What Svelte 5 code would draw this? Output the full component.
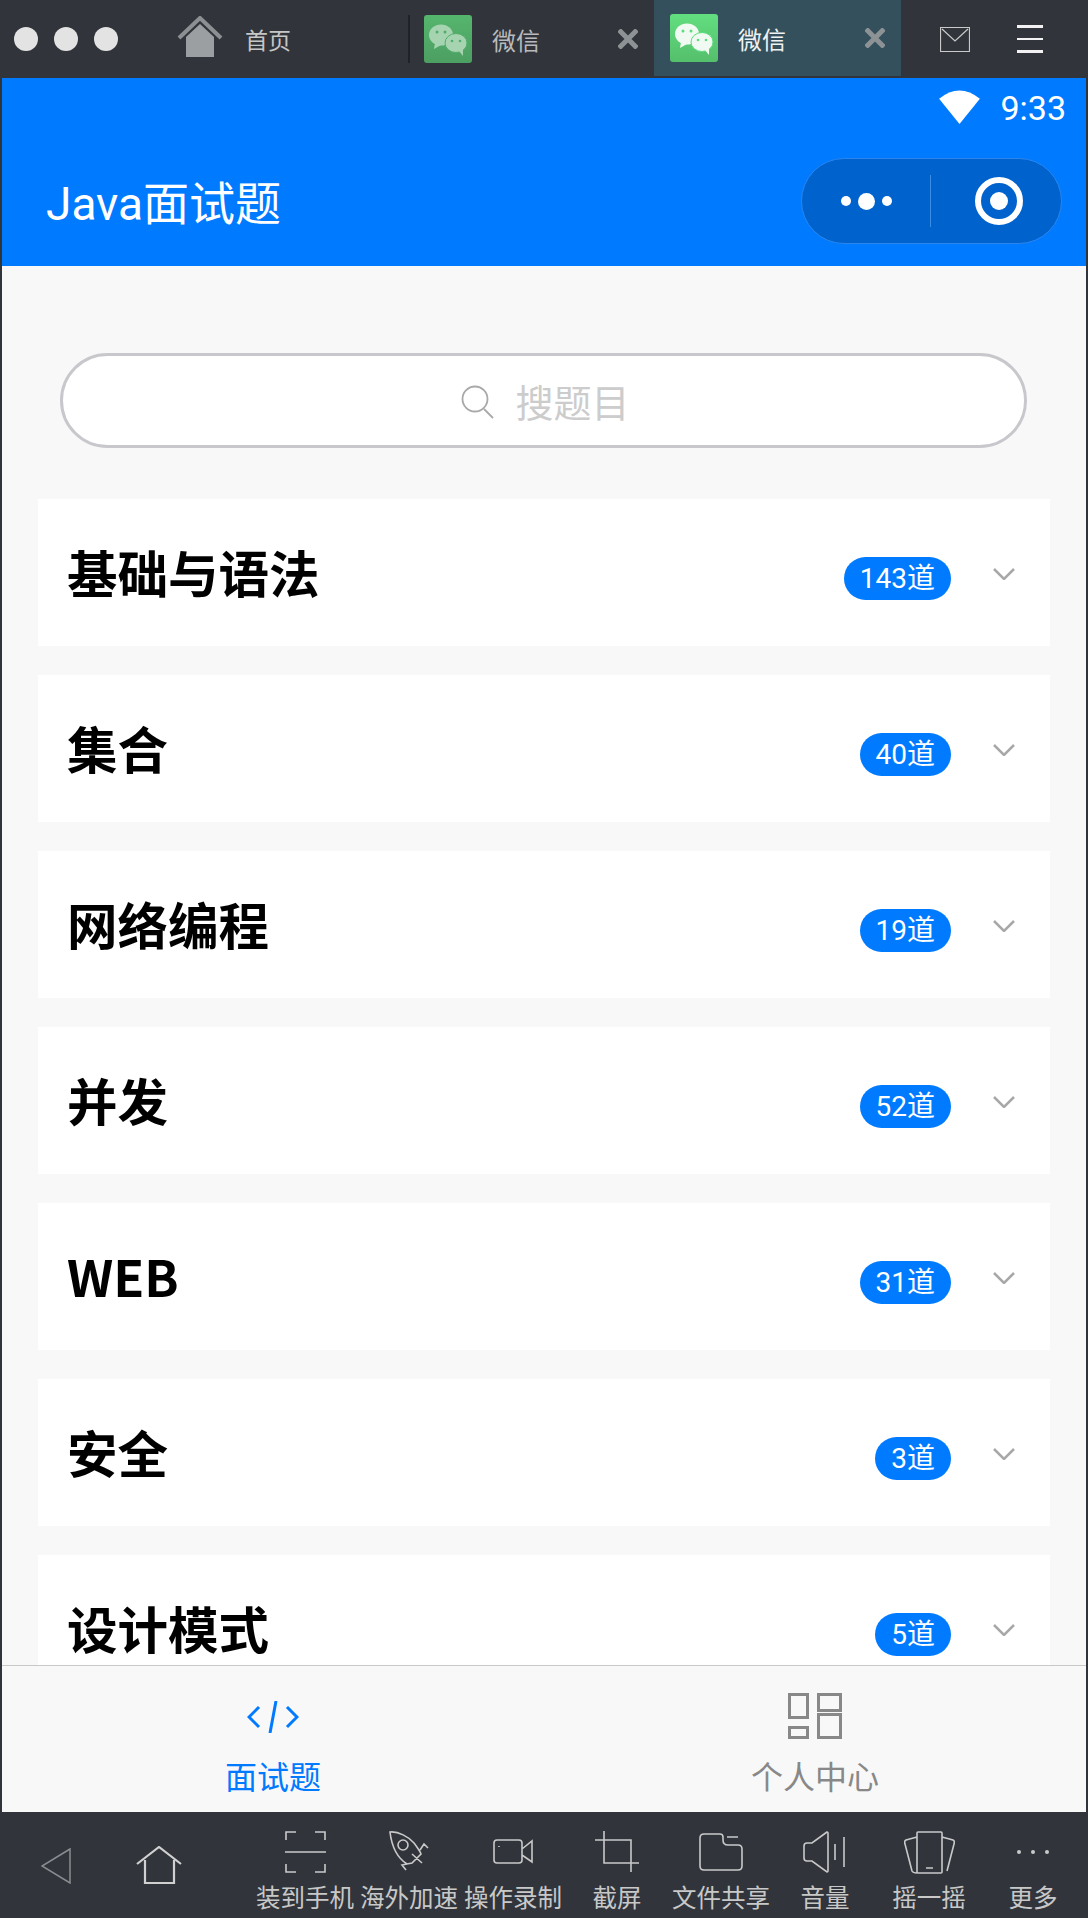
<script>
  const rows = [
    { name: '基础与语法', count: 143 },
    { name: '集合', count: 40 },
    { name: '网络编程', count: 19 },
    { name: '并发', count: 52 },
    { name: 'WEB', count: 31 },
    { name: '安全', count: 3 },
    { name: '设计模式', count: 5 }
  ];
  const tools = [
    { label: '装到手机', d: 'M1 9V1H11M30 1H40V9M1 33V41H11M30 41H40V33M0 21H41', w: 41, h: 42 },
    { label: '海外加速', d: 'M1 1C9 0 20 6 25 12C28 16 31 20 32 23L23 32L18 33C10 28 3 18 1 1ZM19 14A5 5 0 1 1 9 14A5 5 0 1 1 19 14ZM31 19L35 13L39 17M18 33L13 34L17 39M23 23L33 32', w: 41, h: 42 },
    { label: '操作录制', d: 'M4 9H26Q29 9 29 12V29Q29 32 26 32H4Q1 32 1 29V12Q1 9 4 9ZM29 18L39 10V31L29 24ZM6 15V16', w: 41, h: 42 },
    { label: '截屏', d: 'M0 9H36V32M9 0V32H44M36 32V41M36 32', w: 44, h: 42 },
    { label: '文件共享', d: 'M5 3H21Q24 3 24 6V9Q24 14 29 14H39Q43 14 43 18V35Q43 39 39 39H5Q1 39 1 35V7Q1 3 5 3ZM28 6H39', w: 44, h: 42 },
    { label: '音量', d: 'M24 1L9 12H4Q1 12 1 15V27Q1 30 4 30H9L24 41Q25 41 25 40V2Q25 1 24 1ZM32 13V29M41 6V36', w: 44, h: 42 },
    { label: '摇一摇', d: 'M14 1H37Q38 1 38 2V41Q38 42 37 42H14Q13 42 13 41V2Q13 1 14 1ZM22 37H29M13 6L2 9Q0 10 1 13L8 40Q9 42 13 42M38 6L49 9Q51 10 50 13L43 40', w: 51, h: 43 }
  ];
</script>

<div class="window">
  <header class="topbar">
    <div class="lights"><i></i><i></i><i></i></div>
    <svg class="home" viewBox="0 0 46 42" aria-hidden="true">
      <path class="home-fill" d="M9 21L23 8L37 21V41H9Z" />
      <path class="home-roof" d="M2 22L23 2L44 22" />
    </svg>
    <span class="tab-home">首页</span>
    <div class="sep sep-a"></div>
    <div class="wx dim">
      <svg viewBox="0 0 48 48" aria-hidden="true">
        <ellipse cx="17" cy="20" rx="12" ry="10.500" fill="currentColor" />
        <path d="M11 28L10 34L17 30Z" fill="currentColor" />
        <ellipse cx="32" cy="28" rx="11" ry="9.500" fill="currentColor" stroke="var(--wx)" stroke-width="1" />
        <path d="M35 36L39 41L39 34Z" fill="currentColor" />
        <g fill="var(--wx)"><circle cx="13" cy="17" r="1.500" /><circle cx="21" cy="17" r="1.500" /><circle cx="28" cy="26" r="1.300" /><circle cx="36" cy="26" r="1.300" /></g>
      </svg>
    </div>
    <span class="tab-label">微信</span>
    <svg class="close close-a" viewBox="0 0 20 20" aria-hidden="true"><path d="M1 1L19 19M19 1L1 19" /></svg>
    <div class="sep sep-b"></div>
    <div class="active">
      <div class="wx">
        <svg viewBox="0 0 48 48" aria-hidden="true">
          <ellipse cx="17" cy="20" rx="12" ry="10.500" fill="currentColor" />
          <path d="M11 28L10 34L17 30Z" fill="currentColor" />
          <ellipse cx="32" cy="28" rx="11" ry="9.500" fill="currentColor" stroke="var(--wx)" stroke-width="1" />
          <path d="M35 36L39 41L39 34Z" fill="currentColor" />
          <g fill="var(--wx)"><circle cx="13" cy="17" r="1.500" /><circle cx="21" cy="17" r="1.500" /><circle cx="28" cy="26" r="1.300" /><circle cx="36" cy="26" r="1.300" /></g>
        </svg>
      </div>
      <span class="tab-label on">微信</span>
      <svg class="close close-b" viewBox="0 0 20 20" aria-hidden="true"><path d="M1 1L19 19M19 1L1 19" /></svg>
    </div>
    <svg class="mail" viewBox="0 0 30 25" aria-hidden="true"><path d="M.5.5H29.500V24.500H.5ZM2 2L15 14L28 2" /></svg>
    <div class="menu"><i></i><i></i><i></i></div>
  </header>

  <main class="phone">
    <section class="nav">
      <div class="status">
        <svg viewBox="0 0 42 35" aria-hidden="true"><path d="M0 9Q21 -8 42 9L21 35Z" /></svg>
        <span>9:33</span>
      </div>
      <div class="navrow">
        <h1>Java面试题</h1>
        <div class="capsule">
          <div class="cap-dots"><i></i><b></b><i></i></div>
          <div class="cap-line"></div>
          <div class="cap-target"><span></span></div>
        </div>
      </div>
    </section>

    <section class="scroll">
      <div class="search">
        <svg viewBox="0 0 34 34" aria-hidden="true"><circle cx="14" cy="14" r="12.500" /><path d="M23 24L32 33" /></svg>
        <span>搜题目</span>
      </div>
      {#each rows as row}
        <div class="row">
          <span class="name">{row.name}</span>
          <span class="badge">{row.count}道</span>
          <svg class="chev" viewBox="0 0 22 12" aria-hidden="true"><path d="M1 1L11 11L21 1" /></svg>
        </div>
      {/each}
    </section>

    <nav class="tabs">
      <div class="tab cur">
        <svg class="code" viewBox="0 0 52 32" aria-hidden="true"><path d="M12 6L2 16L12 26M40 6L50 16L40 26M29 0L23 32" /></svg>
        <span>面试题</span>
      </div>
      <div class="tab">
        <svg class="grid" viewBox="0 0 54 46" aria-hidden="true">
          <path d="M1.500 1.500H19.500V24.500H1.500ZM30.500 1.500H52.500V17.500H30.500ZM1.500 34.500H19.500V44.500H1.500ZM30.500 21.500H52.500V44.500H30.500Z" />
        </svg>
        <span>个人中心</span>
      </div>
    </nav>
  </main>

  <footer class="dock">
    <svg class="back" viewBox="0 0 30 36" aria-hidden="true"><path d="M29 1L1 18L29 35Z" /></svg>
    <svg class="dock-home" viewBox="0 0 46 38" aria-hidden="true"><path d="M1 18L23 1L45 18M9 14V37H38V14" /></svg>
    <div class="tools">
      {#each tools as t}
        <div class="tool">
          <div class="tool-icon">
            <svg width={t.w} height={t.h} viewBox="0 0 {t.w} {t.h}" aria-hidden="true"><path d={t.d} /></svg>
          </div>
          <span>{t.label}</span>
        </div>
      {/each}
      <div class="tool">
        <div class="tool-icon more"><i></i><i></i><i></i></div>
        <span>更多</span>
      </div>
    </div>
  </footer>
</div>

<style>
  :global(body) { margin: 0; background: #31353b; }
  .window {
    width: 1088px; height: 1918px; display: flex; flex-direction: column; overflow: hidden;
    font-family: Roboto, "Noto Sans CJK SC", sans-serif; background: #31353b;
  }
  .topbar { height: 78px; flex: none; display: flex; align-items: center; position: relative; }
  .lights { display: flex; gap: 16px; margin-left: 14px; }
  .lights i { width: 24px; height: 24px; border-radius: 50%; background: #e3e3e3; }
  .home { width: 46px; height: 42px; margin-left: 59px; margin-top: -4px; flex: none; }
  .home-fill { fill: #9c9fa1; }
  .home-roof { fill: none; stroke: #8d9092; stroke-width: 4; }
  .tab-home { margin-left: 22px; width: 47px; white-space: nowrap; font-size: 23px; color: #c6c6c6; }
  .sep { width: 2px; height: 48px; background: #1f2226; flex: none; }
  .sep-a { margin-left: 116px; }
  .wx {
    --wx: #5fdc7e; width: 48px; height: 48px; border-radius: 3px; flex: none; color: #f0faf2;
    background: linear-gradient(#62de7f, #55bf6c);
  }
  .wx svg { display: block; width: 48px; height: 48px; }
  .wx.dim { --wx: #52ad68; margin-left: 14px; color: #a6d4b1; background: linear-gradient(#55b56d, #4c9f62); }
  .tab-label { margin-left: 20px; font-size: 24px; color: #b9babb; white-space: nowrap; }
  .tab-label.on { color: #eef2f3; }
  .close { width: 20px; height: 20px; flex: none; fill: none; stroke: #8d9295; stroke-width: 5; }
  .close-a { margin-left: 78px; }
  .sep-b { margin-left: 16px; margin-right: -2px; }
  .active {
    width: 247px; height: 76px; align-self: flex-start; background: #34505d; display: flex; align-items: center; flex: none;
    padding-left: 16px; box-sizing: border-box;
  }
  .close-b { margin-left: 79px; }
  .mail { width: 30px; height: 25px; margin-left: 39px; flex: none; fill: none; stroke: #c9c9c9; stroke-width: 1.200; }
  .menu { display: flex; flex-direction: column; gap: 10px; margin-left: 47px; }
  .menu i { width: 26px; height: 2.500px; background: #f2f2f2; }

  .phone {
    flex: none; height: 1734px; margin: 0 2px; display: flex; flex-direction: column; background: #f8f8f8; overflow: hidden;
  }
  .nav { height: 188px; flex: none; background: #007aff; color: #fff; display: flex; flex-direction: column; }
  .status { height: 46px; display: flex; justify-content: flex-end; align-items: center; padding-right: 20px; padding-top: 8px; box-sizing: border-box; }
  .status svg { width: 41px; height: 34px; fill: #fff; margin-right: 20px; margin-top: 4px; }
  .status span { font-size: 34px; line-height: 34px; margin-top: 5px; }
  .navrow { display: flex; align-items: center; justify-content: space-between; padding: 34px 24px 0 44px; }
  h1 { margin: 6px 0 0; font-size: 46px; font-weight: 400; line-height: 60px; }
  .capsule {
    width: 261px; height: 86px; box-sizing: border-box; border-radius: 43px; background: #0062cc;
    border: 1.500px solid #2a86ee; display: flex; align-items: center;
  }
  .cap-dots { width: 128px; display: flex; align-items: center; justify-content: center; gap: 7px; }
  .cap-dots i { width: 10px; height: 10px; border-radius: 50%; background: #fff; }
  .cap-dots b { width: 17px; height: 17px; border-radius: 50%; background: #fff; }
  .cap-line { width: 1px; height: 52px; background: #3a8de6; }
  .cap-target { flex: 1; display: flex; justify-content: center; padding-left: 5px; box-sizing: border-box; }
  .cap-target span {
    width: 48px; height: 48px; box-sizing: border-box; border-radius: 50%; border: 6px solid #fff; position: relative;
  }
  .cap-target span::after {
    content: ''; position: absolute; left: 9px; top: 9px; width: 18px; height: 18px; border-radius: 50%; background: #fff;
  }

  .scroll { flex: 1; min-height: 0; overflow: hidden; padding: 87px 36px 0; display: flex; flex-direction: column; gap: 29px; }
  .search {
    flex: none; width: 967px; height: 95px; margin: 0 0 22px 22px; padding-left: 4px; box-sizing: border-box; background: #fff; border: 3px solid #c8c7cc;
    border-radius: 48px; display: flex; align-items: center; justify-content: center; gap: 20px;
  }
  .search svg { width: 34px; height: 34px; fill: none; stroke: #a9a9a9; stroke-width: 1.800; margin-top: 2px; }
  .search span { font-size: 38px; color: #cccccc; }
  .row {
    flex: none; height: 147px; background: #fff; display: flex; align-items: center; padding-left: 29px; padding-right: 35px;
  }
  .name { flex: 1; font: 700 50.500px/1 "Noto Sans CJK SC", sans-serif; color: #000; margin-top: -3px; }
  .badge {
    height: 43px; line-height: 43px; padding: 0 16px; border-radius: 22px; background: #007aff; color: #fff; font-size: 28px;
    margin-top: 12px; white-space: nowrap;
  }
  .chev { width: 22px; height: 12px; margin-left: 42px; margin-top: 3px; fill: none; stroke: #a8a8a8; stroke-width: 2.500; }

  .tabs { height: 147px; flex: none; box-sizing: border-box; border-top: 1px solid #c8c8c8; background: #f8f8f8; display: flex; }
  .tab { flex: 1; display: flex; flex-direction: column; align-items: center; justify-content: flex-end; padding-bottom: 10px; color: #888; font-size: 32px; }
  .tab span { line-height: 48px; }
  .tab.cur { color: #007aff; }
  .tab svg { fill: none; stroke: currentColor; }
  .code { width: 52px; height: 32px; stroke-width: 3; margin-bottom: 21px; }
  .grid { width: 54px; height: 46px; stroke-width: 3; margin-bottom: 15px; }

  .dock { flex: 1; display: flex; align-items: flex-start; }
  .back { width: 30px; height: 36px; margin: 36px 0 0 41px; fill: none; stroke: #8a8d90; stroke-width: 1.500; flex: none; }
  .dock-home { width: 46px; height: 38px; margin: 34px 0 0 65px; fill: none; stroke: #d0d0d0; stroke-width: 2.200; flex: none; }
  .tools { display: flex; margin-left: 71px; flex: none; }
  .tool { width: 104px; display: flex; flex-direction: column; align-items: center; color: #c8c8c8; font-size: 24.500px; white-space: nowrap; }
  .tool-icon { height: 44px; margin-top: 18px; display: flex; align-items: center; justify-content: center; }
  .tool svg { fill: none; stroke: #c9c9c9; stroke-width: 1.600; display: block; }
  .tool span { line-height: 34px; margin-top: 8px; }
  .more { gap: 10px; }
  .more i { width: 4px; height: 4px; border-radius: 50%; background: #c9c9c9; }
</style>
